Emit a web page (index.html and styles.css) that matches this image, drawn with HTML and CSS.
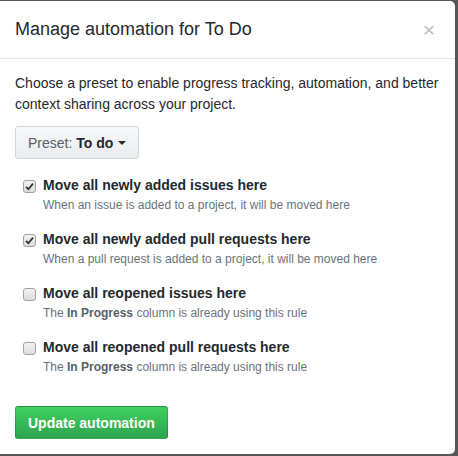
FILE: index.html
```html
<!DOCTYPE html>
<html>
<head>
<meta charset="utf-8">
<link rel="stylesheet" href="styles.css">
</head>
<body>
<div class="modal">
  <div class="modal-header">
    <h2 class="modal-title">Manage automation for To Do</h2>
    <span class="close">×</span>
  </div>
  <div class="modal-body">
    <p class="intro">Choose a preset to enable progress tracking, automation, and better context sharing across your project.</p>
    <button class="preset-btn"><span class="preset-label">Preset:</span> <strong>To do</strong><span class="caret"></span></button>
    <div class="rules">
      <div class="rule">
        <span class="cb checked"><svg width="9" height="9" viewBox="0 0 9 9"><path d="M1 4.8 L3.4 7.2 L8 1.6" fill="none" stroke="#333" stroke-width="1.8"/></svg></span>
        <div class="rule-text">
          <div class="rule-title">Move all newly added issues here</div>
          <div class="note">When an issue is added to a project, it will be moved here</div>
        </div>
      </div>
      <div class="rule">
        <span class="cb checked"><svg width="9" height="9" viewBox="0 0 9 9"><path d="M1 4.8 L3.4 7.2 L8 1.6" fill="none" stroke="#333" stroke-width="1.8"/></svg></span>
        <div class="rule-text">
          <div class="rule-title">Move all newly added pull requests here</div>
          <div class="note">When a pull request is added to a project, it will be moved here</div>
        </div>
      </div>
      <div class="rule">
        <span class="cb"></span>
        <div class="rule-text">
          <div class="rule-title">Move all reopened issues here</div>
          <div class="note">The <b>In Progress</b> column is already using this rule</div>
        </div>
      </div>
      <div class="rule">
        <span class="cb"></span>
        <div class="rule-text">
          <div class="rule-title">Move all reopened pull requests here</div>
          <div class="note">The <b>In Progress</b> column is already using this rule</div>
        </div>
      </div>
    </div>
    <button class="green-btn">Update automation</button>
  </div>
</div>
</body>
</html>
```
FILE: styles.css
```css
html, body {
  margin: 0;
  padding: 0;
  background: #565656;
  height: 456px;
  overflow: hidden;
}
body {
  font-family: "Liberation Sans", Arial, sans-serif;
  color: #333;
  padding-top: 1px;
}
.modal {
  width: 455px;
  height: 453px;
  background: #fff;
  border-radius: 0 5px 5px 0;
  box-sizing: border-box;
  display: flex;
  flex-direction: column;
}
.modal-header {
  height: 58px;
  box-sizing: border-box;
  border-bottom: 1px solid #e1e4e8;
  padding: 15px 15px 0 15px;
  display: flex;
  justify-content: space-between;
  align-items: flex-start;
}
.modal-title {
  margin: 0;
  font-size: 18px;
  font-weight: normal;
  line-height: 27px;
  color: #24292e;
}
.close {
  font-size: 21px;
  line-height: 27px;
  color: #bdbdbd;
  margin-right: 5px;
}
.modal-body {
  padding: 14px 15px 0 15px;
  display: flex;
  flex-direction: column;
  align-items: flex-start;
}
.intro {
  margin: 0;
  font-size: 14px;
  line-height: 21px;
  color: #24292e;
}
.preset-btn {
  margin-top: 11px;
  height: 33px;
  padding: 0 12px;
  font-family: inherit;
  font-size: 14px;
  color: #24292e;
  background: linear-gradient(#f8f9fa, #e9ecef);
  border: 1px solid #d1d5da;
  border-radius: 3px;
  display: flex;
  align-items: center;
}
.preset-label {
  color: #586069;
  white-space: pre;
}
.preset-btn strong {
  margin-left: 4px;
}
.caret {
  display: inline-block;
  margin-left: 5px;
  width: 0;
  height: 0;
  border-top: 4px solid #24292e;
  border-left: 4px solid transparent;
  border-right: 4px solid transparent;
}
.rules {
  margin-top: 16px;
  display: flex;
  flex-direction: column;
  gap: 14px;
}
.rule {
  display: flex;
  align-items: flex-start;
  padding-left: 8px;
}
.cb {
  width: 13px;
  height: 13px;
  box-sizing: border-box;
  border: 1px solid #a3a3a3;
  border-radius: 3px;
  background: linear-gradient(#f3f3f3, #dcdcdc);
  margin-top: 5px;
  margin-right: 7px;
  display: flex;
  align-items: center;
  justify-content: center;
}
.rule-title {
  font-size: 14px;
  font-weight: bold;
  line-height: 20px;
  color: #24292e;
}
.note {
  margin-top: 1px;
  font-size: 12px;
  line-height: 19px;
  color: #6a737d;
}
.note b {
  color: #586069;
}
.green-btn {
  margin-top: 29px;
  height: 33px;
  padding: 0 12px;
  font-family: inherit;
  font-size: 14px;
  font-weight: bold;
  color: #fff;
  background: linear-gradient(#3fd05f, #2ea44f);
  border: 1px solid rgba(27, 31, 35, 0.2);
  border-radius: 3px;
}
```
